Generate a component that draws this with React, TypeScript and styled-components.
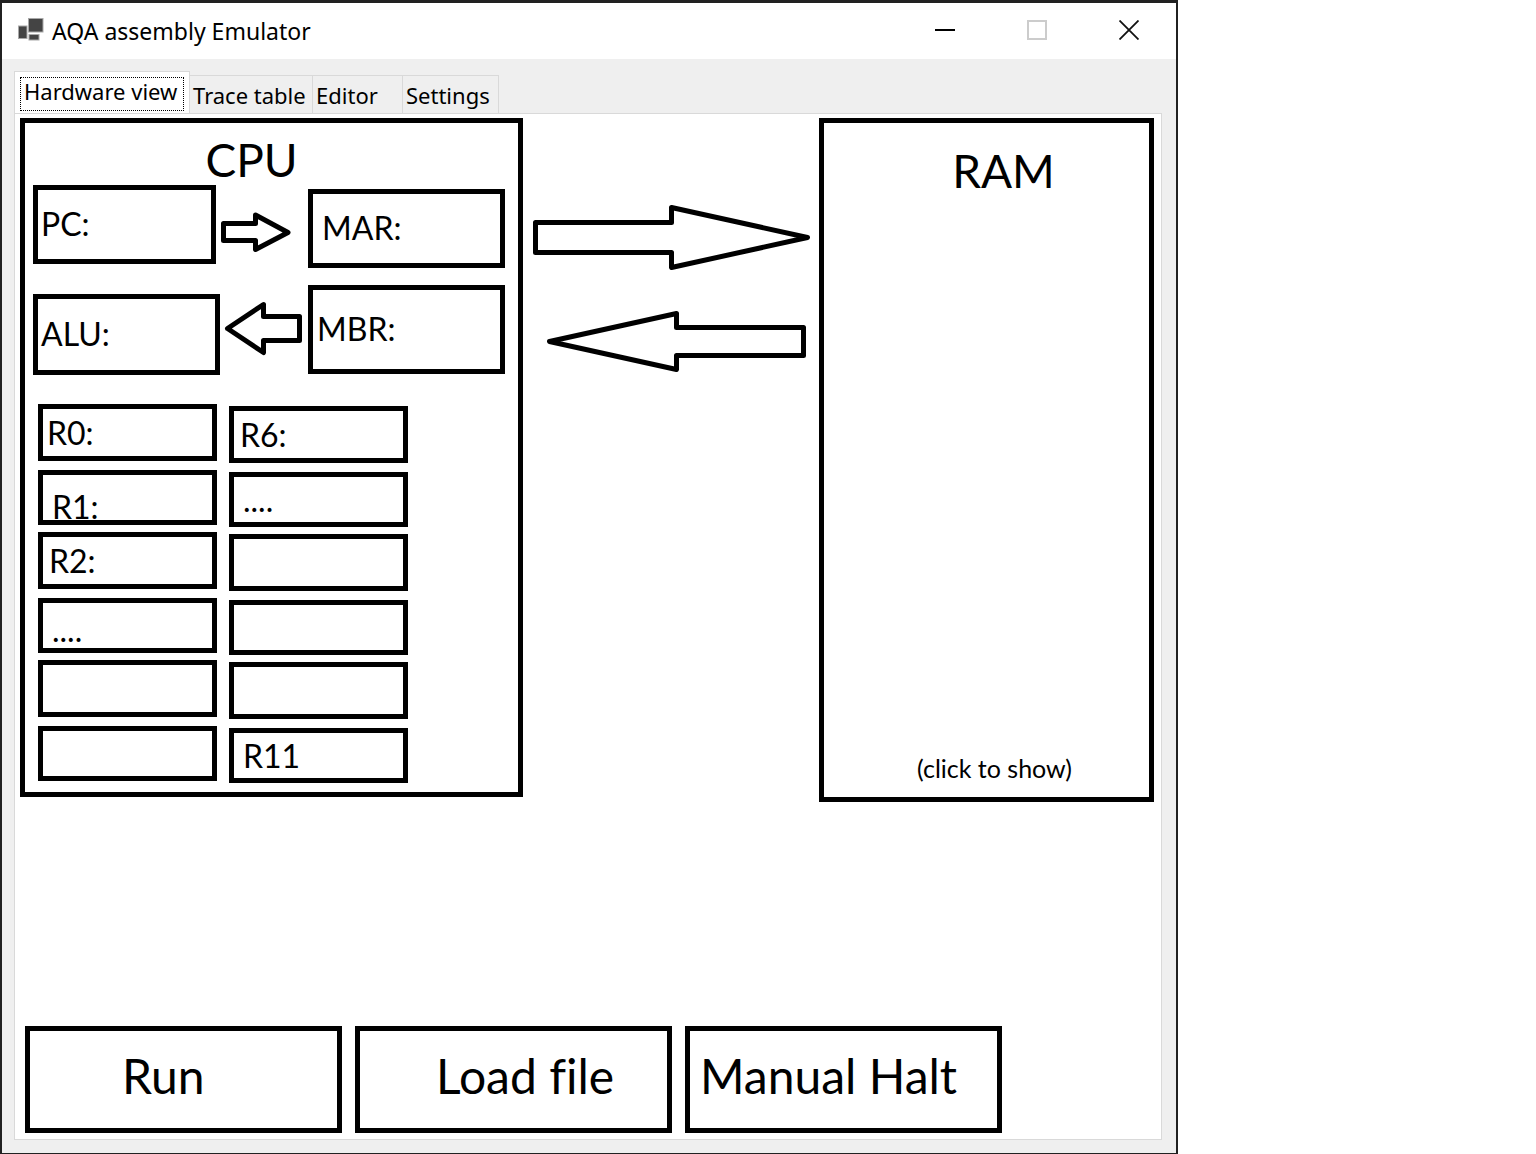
import React, { useState } from "react";
import styled, { createGlobalStyle } from "styled-components";

const GlobalStyle = createGlobalStyle`
  *, *::before, *::after { box-sizing: border-box; }
  body {
    margin: 0;
    background: #ffffff;
    color: #000000;
    font-family: "Noto Sans", "Open Sans", sans-serif;
  }
  button { font: inherit; color: inherit; cursor: pointer; }
`;

const Window = styled.div`
  display: flex;
  flex-direction: column;
  width: 100%;
  max-width: 1178px;
  min-height: 100vh;
  background: #efefef;
  border: solid #212121;
  border-width: 3px 2px 1px;
`;

const TitleBar = styled.header`
  display: flex;
  align-items: center;
  height: 56px;
  padding: 0 1px 0 16px;
  background: #ffffff;
`;

const AppTitle = styled.h1`
  flex: 1;
  margin: 0 0 0 8px;
  font-size: 23px;
  font-weight: 400;
  line-height: 32px;
`;

const CaptionButton = styled.button`
  display: grid;
  place-items: center;
  width: 92px;
  height: 56px;
  padding: 0 0 2px;
  border: 0;
  background: transparent;
`;

const Body = styled.main`
  display: flex;
  flex: 1;
  flex-direction: column;
  padding: 12px 14px 13px 12px;
`;

const TabList = styled.div`
  display: flex;
  align-items: flex-end;
  height: 42px;
`;

const Tab = styled.button<{ $active: boolean; $width: number }>`
  flex: none;
  width: ${(p) => p.$width}px;
  height: ${(p) => (p.$active ? 43 : 38)}px;
  margin-bottom: ${(p) => (p.$active ? -1 : 0)}px;
  padding: ${(p) => (p.$active ? "4px 5px 3px 5px" : "3px 0 0")};
  border: solid #d9d9d9;
  border-width: ${(p) => (p.$active ? "1px 1px 0 1px" : "1px 1px 0 0")};
  background: ${(p) => (p.$active ? "#ffffff" : "#efefef")};
  font-size: 22px;
  line-height: 32px;
  text-align: left;
  white-space: nowrap;
`;

const TabText = styled.span<{ $active: boolean }>`
  display: block;
  height: 34px;
  padding-left: 3px;
  border: ${(p) => (p.$active ? "1px dotted #000000" : "0")};
  line-height: ${(p) => (p.$active ? 26 : 32)}px;
`;

const Panel = styled.section`
  display: flex;
  flex: 1;
  flex-direction: column;
  justify-content: space-between;
  gap: 24px;
  padding: 4px 7px 6px 5px;
  border: 1px solid #d9d9d9;
  background: #ffffff;
  font-family: Lato, "Open Sans", sans-serif;
  font-variant-ligatures: none;
`;

const Diagram = styled.div`
  display: flex;
  align-items: flex-start;
`;

const Unit = styled.section<{ $width: number; $height: number }>`
  display: flex;
  flex: none;
  flex-direction: column;
  width: ${(p) => p.$width}px;
  min-height: ${(p) => p.$height}px;
  border: 5px solid #000000;
`;

const UnitTitle = styled.h2<{ $shift: "left" | "right" }>`
  margin: 0;
  padding: ${(p) => (p.$shift === "left" ? "12px 40px 0 0" : "23px 0 0 34px")};
  font-size: 46px;
  font-weight: 400;
  line-height: 50px;
  text-align: center;
`;

const Flow = styled.div`
  display: flex;
  padding-left: 8px;
`;

const FlowColumn = styled.div<{ $width: number; $top: number; $gap: number }>`
  display: flex;
  flex: none;
  flex-direction: column;
  gap: ${(p) => p.$gap}px;
  width: ${(p) => p.$width}px;
  padding-top: ${(p) => p.$top}px;
`;

const Box = styled.div<{ $width: number; $height: number; $inset: number }>`
  display: flex;
  align-items: center;
  width: ${(p) => p.$width}px;
  height: ${(p) => p.$height}px;
  padding: 0 0 2px ${(p) => p.$inset}px;
  border: 5px solid #000000;
  font-size: 32px;
  line-height: 40px;
`;

const Registers = styled.div`
  display: flex;
  gap: 12px;
  padding: 29px 0 0 13px;
`;

const RegisterColumn = styled.div<{ $top: number }>`
  display: flex;
  flex-direction: column;
  gap: 7px;
  padding-top: ${(p) => p.$top}px;
`;

const Register = styled.div<{ $inset: number; $line?: number }>`
  display: flex;
  align-items: ${(p) => (p.$line ? "flex-end" : "center")};
  width: 179px;
  height: 57px;
  padding-left: ${(p) => p.$inset}px;
  border: 5px solid #000000;
  font-size: 32px;
  line-height: ${(p) => p.$line ?? 38}px;

  &:nth-child(even) {
    height: 55px;
    margin-top: 2px;
  }
`;

const Bus = styled.div`
  display: flex;
  flex: 1;
  flex-direction: column;
  align-items: flex-end;
  gap: 41px;
  padding: 87px 8px 0 0;
`;

const Arrow = styled.svg`
  display: block;
  flex: none;
  fill: none;
  stroke: #000000;
  stroke-width: 5px;
  stroke-linejoin: round;
`;

const ShowLink = styled.button`
  margin: auto 0 12px 16px;
  padding: 0;
  border: 0;
  background: transparent;
  font-size: 25px;
  line-height: 34px;
`;

const Actions = styled.div`
  display: flex;
  gap: 13px;
  padding-left: 5px;
`;

const ActionButton = styled.button<{ $inset: number }>`
  width: 317px;
  height: 107px;
  padding: 0 0 8px ${(p) => p.$inset}px;
  border: 5px solid #000000;
  background: #ffffff;
  font-size: 48px;
  line-height: 56px;
  text-align: left;
  white-space: nowrap;
`;

const TABS = [
  { label: "Hardware view", width: 176 },
  { label: "Trace table", width: 123 },
  { label: "Editor", width: 90 },
  { label: "Settings", width: 96 },
];

const LEFT_REGISTERS = [
  { label: "R0:", inset: 4 },
  { label: "R1:", inset: 9, line: 26 },
  { label: "R2:", inset: 6 },
  { label: "....", inset: 9, line: 36 },
  { label: "", inset: 9 },
  { label: "", inset: 9 },
];

const RIGHT_REGISTERS = [
  { label: "R6:", inset: 6 },
  { label: "....", inset: 9 },
  { label: "", inset: 9 },
  { label: "", inset: 9 },
  { label: "", inset: 9 },
  { label: "R11", inset: 9 },
];

const AppIcon = () => (
  <svg width="26" height="26" viewBox="0 0 26 26" aria-hidden="true">
    <g fill="#444444" stroke="#a8a8a8" strokeWidth="1">
      <rect x="10.5" y="0.500" width="14.500" height="13.500" />
      <rect x="0.5" y="8" width="8.500" height="12.500" />
      <rect x="11" y="16.500" width="10" height="5.500" />
    </g>
  </svg>
);

export default function App() {
  const [active, setActive] = useState(0);
  return (
    <>
      <GlobalStyle />
      <Window>
        <TitleBar>
          <AppIcon />
          <AppTitle>AQA assembly Emulator</AppTitle>
          <CaptionButton aria-label="Minimize">
            <svg width="20" height="20">
              <path d="M0 10H20" stroke="#000" strokeWidth="2" />
            </svg>
          </CaptionButton>
          <CaptionButton aria-label="Maximize" disabled>
            <svg width="20" height="20">
              <rect x="1" y="1" width="18" height="18" fill="none" stroke="#cccccc" strokeWidth="2" />
            </svg>
          </CaptionButton>
          <CaptionButton aria-label="Close">
            <svg width="20" height="20">
              <path d="M0.5 0.5L19.5 19.5M19.5 0.5L0.5 19.5" stroke="#111" strokeWidth="1.8" />
            </svg>
          </CaptionButton>
        </TitleBar>
        <Body>
          <TabList role="tablist">
            {TABS.map((tab, i) => (
              <Tab
                key={tab.label}
                role="tab"
                aria-selected={i === active}
                $active={i === active}
                $width={tab.width}
                onClick={() => setActive(i)}
              >
                <TabText $active={i === active}>{tab.label}</TabText>
              </Tab>
            ))}
          </TabList>
          <Panel>
            <Diagram>
              <Unit $width={503} $height={679}>
                <UnitTitle $shift="left">CPU</UnitTitle>
                <Flow>
                  <FlowColumn $width={188} $top={0} $gap={30}>
                    <Box $width={183} $height={79} $inset={3}>PC:</Box>
                    <Box $width={187} $height={81} $inset={3}>ALU:</Box>
                  </FlowColumn>
                  <FlowColumn $width={87} $top={26} $gap={48}>
                    <Arrow width="70" height="42" viewBox="221 211 70 42" aria-hidden="true">
                      <path d="M223.5 223.5H255.5V215L288 232.5L255.5 249.5V240.5H223.5Z" />
                    </Arrow>
                    <Arrow width="81" height="56" viewBox="221 301 81 56" aria-hidden="true">
                      <path d="M299.5 316.5H263.5V304.5L227.5 328.5L263.5 352.5V340.5H299.5Z" />
                    </Arrow>
                  </FlowColumn>
                  <FlowColumn $width={197} $top={4} $gap={17}>
                    <Box $width={197} $height={79} $inset={9}>MAR:</Box>
                    <Box $width={197} $height={89} $inset={4}>MBR:</Box>
                  </FlowColumn>
                </Flow>
                <Registers>
                  <RegisterColumn $top={0}>
                    {LEFT_REGISTERS.map((r, i) => (
                      <Register key={i} $inset={r.inset} $line={r.line}>{r.label}</Register>
                    ))}
                  </RegisterColumn>
                  <RegisterColumn $top={2}>
                    {RIGHT_REGISTERS.map((r, i) => (
                      <Register key={i} $inset={r.inset}>{r.label}</Register>
                    ))}
                  </RegisterColumn>
                </Registers>
              </Unit>
              <Bus>
                <Arrow width="278" height="65" viewBox="533 205 278 65" aria-hidden="true">
                  <path d="M535.5 222.5H671.5V207.5L807.5 237.5L671.5 267.5V252.5H535.5Z" />
                </Arrow>
                <Arrow width="264" height="61" viewBox="547 311 264 61" aria-hidden="true">
                  <path d="M803.5 327.5H676.5V313.5L549.5 341.5L676.5 369.5V355.5H803.5Z" />
                </Arrow>
              </Bus>
              <Unit $width={335} $height={684}>
                <UnitTitle $shift="right">RAM</UnitTitle>
                <ShowLink>(click to show)</ShowLink>
              </Unit>
            </Diagram>
            <Actions>
              <ActionButton $inset={92}>Run</ActionButton>
              <ActionButton $inset={76}>Load file</ActionButton>
              <ActionButton $inset={10}>Manual Halt</ActionButton>
            </Actions>
          </Panel>
        </Body>
      </Window>
    </>
  );
}
